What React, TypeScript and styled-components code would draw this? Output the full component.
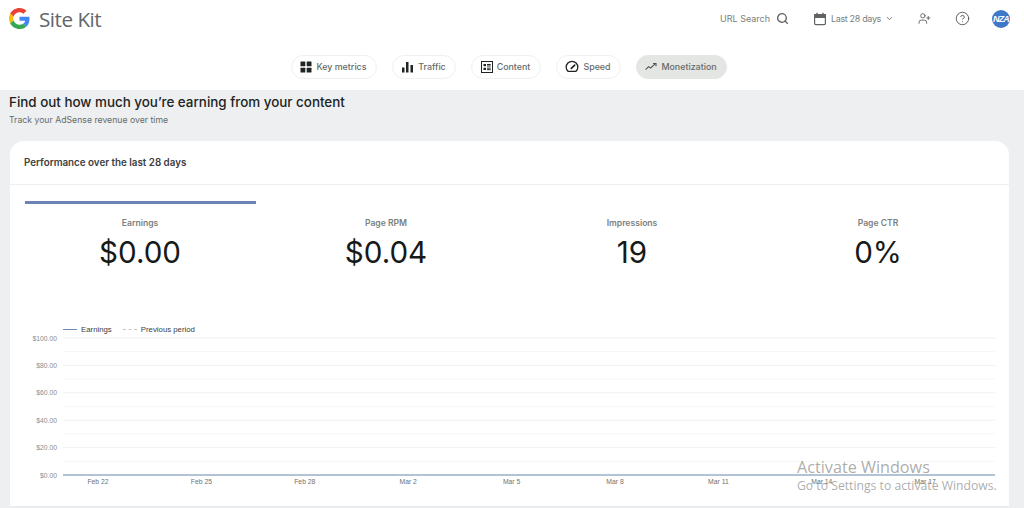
import React from 'react';
import styled, { createGlobalStyle } from 'styled-components';
import { Search, ChevronDown, UserPlus, CircleHelp } from 'lucide-react';

const GlobalStyle = createGlobalStyle`
  html, body {
    margin: 0;
    padding: 0;
    height: 100%;
    overflow: hidden;
    background: #eeeff1;
    font-family: 'Inter', 'Liberation Sans', sans-serif;
  }
`;

const Page = styled.div`
  position: relative;
  width: 1024px;
  height: 508px;
  overflow: hidden;
`;

const Header = styled.header`
  height: 90px;
  background: #ffffff;
  box-sizing: border-box;
  padding: 8px 14px 0 9px;
`;

const TopRow = styled.div`
  display: flex;
  align-items: center;
  height: 21px;
`;

const Brand = styled.div`
  display: flex;
  align-items: center;
  gap: 9px;
  font-family: 'Open Sans', sans-serif;
  font-size: 20.7px;
  color: #63666a;
  letter-spacing: -0.5px;
`;

const Actions = styled.div`
  margin-left: auto;
  display: flex;
  align-items: center;
  color: #5f6561;
  font-size: 9px;
`;

const ActionLabel = styled.span<{ $tight?: boolean }>`
  color: #7b807d;
  letter-spacing: ${p => (p.$tight ? '-0.35px' : '0')};
`;

const ActionGroup = styled.div<{ $gap: number; $after: number }>`
  display: flex;
  align-items: center;
  gap: ${p => p.$gap}px;
  margin-right: ${p => p.$after}px;
`;

const Avatar = styled.div`
  width: 18px;
  height: 18px;
  border-radius: 50%;
  background: #3f78c9;
  color: #ffffff;
  font-family: 'Liberation Sans', sans-serif;
  font-size: 9px;
  font-weight: 700;
  font-style: italic;
  letter-spacing: -0.8px;
  display: flex;
  align-items: center;
  justify-content: center;
`;

const Tabs = styled.nav`
  display: flex;
  justify-content: center;
  gap: 15px;
  margin-top: 26px;
  padding-right: 2px;
`;

const Tab = styled.div<{ $active?: boolean; $width: number }>`
  width: ${p => p.$width}px;
  height: 24px;
  box-sizing: border-box;
  padding-bottom: 1px;
  display: flex;
  align-items: center;
  justify-content: center;
  gap: 4px;
  border-radius: 12px;
  border: 1px solid ${p => (p.$active ? '#e4e6e4' : '#eff0f0')};
  background: ${p => (p.$active ? '#e4e6e4' : '#ffffff')};
  color: #666b68;
  font-size: 8.9px;
  font-weight: 500;
  white-space: nowrap;
`;

const Intro = styled.section`
  padding: 3px 9px 0;
  height: 47px;
  box-sizing: border-box;
`;

const Heading = styled.h1`
  margin: 0;
  font-size: 13.4px;
  line-height: 18px;
  font-weight: 500;
  color: #202422;
`;

const SubHeading = styled.p`
  margin: 3px 0 0;
  font-size: 8.7px;
  line-height: 12px;
  color: #666b68;
`;

const Card = styled.section`
  margin: 4px 15px 0 10px;
  height: 366px;
  box-sizing: border-box;
  background: #ffffff;
  border-radius: 14px 14px 0 0;
  border-bottom: 1px solid #e8eaec;
`;

const CardHeader = styled.div`
  height: 44px;
  box-sizing: border-box;
  padding: 0 14px;
  display: flex;
  align-items: center;
  border-bottom: 1px solid #eeeff1;
  font-size: 9.8px;
  font-weight: 600;
  color: #3c403e;
`;

const Metrics = styled.div`
  display: grid;
  grid-template-columns: repeat(4, 231px);
  gap: 15px;
  padding: 16px 14.5px 0;
`;

const Metric = styled.div<{ $selected?: boolean }>`
  height: 80px;
  box-sizing: border-box;
  border-top: 3px solid ${p => (p.$selected ? '#6c83b3' : 'transparent')};
  text-align: center;
  padding-top: 13px;
`;

const MetricLabel = styled.div`
  font-size: 8.6px;
  line-height: 13px;
  font-weight: 600;
  color: #7b807d;
`;

const MetricValue = styled.div`
  margin-top: 5px;
  font-size: 29.6px;
  line-height: 34px;
  font-weight: 400;
  color: #161a18;
`;

const Legend = styled.div`
  display: flex;
  align-items: center;
  height: 12px;
  margin: 42px 0 0 53px;
  font-family: 'Liberation Sans', sans-serif;
  font-size: 7.8px;
  color: #3c403e;
`;

const LegendItem = styled.div`
  display: flex;
  align-items: center;
  gap: 4px;
  margin-right: 11px;
`;

const LegendLine = styled.span<{ $dashed?: boolean }>`
  width: 14px;
  border-top: ${p => (p.$dashed ? '1px dashed #c4c6c5' : '1px solid #6c8db3')};
`;

const Chart = styled.svg`
  display: block;
  width: 999px;
  height: 160px;
`;

const Watermark = styled.div`
  position: absolute;
  left: 797px;
  top: 457px;
  font-family: 'Open Sans', sans-serif;
  color: rgba(140, 140, 140, 0.72);
  white-space: nowrap;
  pointer-events: none;
`;

const WatermarkTitle = styled.div`
  font-size: 16.2px;
  line-height: 20px;
`;

const WatermarkText = styled.div`
  font-size: 12.2px;
  line-height: 17px;
`;

const GoogleG = () => (
  <svg width="21" height="21" viewBox="0 0 48 48">
    <path fill="#EA4335" d="M24 9.500c3.500 0 6.700 1.300 9.100 3.500l6.800-6.800C35.800 2.400 30.300 0 24 0 14.600 0 6.500 5.400 2.600 13.200l7.900 6.100C12.400 13.600 17.700 9.500 24 9.500z" />
    <path fill="#4285F4" d="M46.900 24.500c0-1.600-.1-3.100-.4-4.500H24v9h12.900c-.6 3-2.200 5.500-4.700 7.200l7.700 6c4.500-4.200 7-10.300 7-17.700z" />
    <path fill="#FBBC05" d="M10.500 28.700c-.5-1.400-.8-3-.8-4.700s.3-3.200.8-4.700l-7.900-6.100C.9 16.500 0 20.100 0 24s.9 7.500 2.600 10.800l7.900-6.100z" />
    <path fill="#34A853" d="M24 48c6.500 0 11.900-2.100 15.900-5.800l-7.700-6c-2.200 1.400-4.900 2.300-8.200 2.300-6.300 0-11.600-4.100-13.500-9.800l-7.900 6.100C6.500 42.600 14.600 48 24 48z" />
  </svg>
);

const CalendarIcon = () => (
  <svg width="14" height="14" viewBox="0 0 14 14" fill="none" stroke="#5f6561" strokeWidth="1.200">
    <rect x="1.600" y="2.600" width="10.800" height="10" rx="1" />
    <rect x="1.600" y="2.600" width="10.800" height="2.800" fill="#5f6561" />
    <path d="M4 .8v2.400M10 .8v2.400" strokeWidth="1.400" />
  </svg>
);

const GridIcon = () => (
  <svg width="12" height="12" viewBox="0 0 12 12" fill="#202422">
    <rect x="0.500" y="0.500" width="4.800" height="4.800" rx="0.500" />
    <rect x="6.700" y="0.500" width="4.800" height="4.800" rx="0.500" />
    <rect x="0.500" y="6.700" width="4.800" height="4.800" rx="0.500" />
    <rect x="6.700" y="6.700" width="4.800" height="4.800" rx="0.500" />
  </svg>
);

const BarsIcon = () => (
  <svg width="13" height="12" viewBox="0 0 13 12" fill="#202422">
    <rect x="1" y="6.500" width="2.500" height="5" />
    <rect x="5" y="1" width="2.500" height="10.500" />
    <rect x="9.500" y="4" width="2.500" height="7.500" />
  </svg>
);

const ArticleIcon = () => (
  <svg width="12" height="12" viewBox="0 0 12 12" fill="none" stroke="#202422" strokeWidth="1">
    <rect x="0.500" y="0.500" width="11" height="11" />
    <rect x="2.500" y="3" width="2.500" height="2.200" fill="#202422" stroke="none" />
    <rect x="2.500" y="6.800" width="2.500" height="2.200" fill="#202422" stroke="none" />
    <path d="M6 3.500h3.700M6 5h3.700M6 7.200h3.700M6 8.700h3.700" />
  </svg>
);

const SpeedIcon = () => (
  <svg width="14" height="13" viewBox="0 0 14 13" fill="none" stroke="#202422" strokeWidth="1.300">
    <path d="M3 11.300h8a5.800 5.800 0 1 0-8 0z" strokeLinejoin="round" />
    <path d="M6.300 8.300l3.400-3.200" strokeWidth="1.700" strokeLinecap="round" />
  </svg>
);

const TrendIcon = () => (
  <svg width="12" height="9" viewBox="0 0 12 9" fill="none" stroke="#4f5552" strokeWidth="1.100">
    <path d="M.6 7.600l3-3 2 1.400 4.600-4.200" />
    <path d="M8 1.500h3v2.800" />
  </svg>
);

const gridRows = [0, 13.7, 27.4, 41.1, 54.8, 68.5, 82.2, 95.9, 109.6, 123.3, 137];
const yLabels = ['$100.00', '$80.00', '$60.00', '$40.00', '$20.00', '$0.00'];
const xLabels = ['Feb 22', 'Feb 25', 'Feb 28', 'Mar 2', 'Mar 5', 'Mar 8', 'Mar 11', 'Mar 14', 'Mar 17'];

const tabs = [
  { label: 'Key metrics', width: 86, icon: <GridIcon /> },
  { label: 'Traffic', width: 64, icon: <BarsIcon /> },
  { label: 'Content', width: 70, icon: <ArticleIcon /> },
  { label: 'Speed', width: 65, icon: <SpeedIcon /> },
  { label: 'Monetization', width: 91, icon: <TrendIcon />, active: true },
];

const metrics = [
  { label: 'Earnings', value: '$0.00', selected: true },
  { label: 'Page RPM', value: '$0.04' },
  { label: 'Impressions', value: '19' },
  { label: 'Page CTR', value: '0%' },
];

const App: React.FC = () => (
  <Page>
    <GlobalStyle />
    <Header>
      <TopRow>
        <Brand>
          <GoogleG />
          Site Kit
        </Brand>
        <Actions>
          <ActionGroup $gap={6} $after={24}>
            <ActionLabel>URL Search</ActionLabel>
            <Search size={13} strokeWidth={2.6} />
          </ActionGroup>
          <ActionGroup $gap={4} $after={24}>
            <CalendarIcon />
            <ActionLabel $tight>Last 28 days</ActionLabel>
            <ChevronDown size={9} strokeWidth={2.2} />
          </ActionGroup>
          <ActionGroup $gap={0} $after={24}>
            <UserPlus size={13} strokeWidth={1.7} />
          </ActionGroup>
          <ActionGroup $gap={0} $after={22}>
            <CircleHelp size={15} strokeWidth={1.6} />
          </ActionGroup>
          <Avatar>NZA</Avatar>
        </Actions>
      </TopRow>
      <Tabs>
        {tabs.map(tab => (
          <Tab key={tab.label} $width={tab.width} $active={tab.active}>
            {tab.icon}
            {tab.label}
          </Tab>
        ))}
      </Tabs>
    </Header>
    <Intro>
      <Heading>Find out how much you’re earning from your content</Heading>
      <SubHeading>Track your AdSense revenue over time</SubHeading>
    </Intro>
    <Card>
      <CardHeader>Performance over the last 28 days</CardHeader>
      <Metrics>
        {metrics.map(metric => (
          <Metric key={metric.label} $selected={metric.selected}>
            <MetricLabel>{metric.label}</MetricLabel>
            <MetricValue>{metric.value}</MetricValue>
          </Metric>
        ))}
      </Metrics>
      <Legend>
        <LegendItem>
          <LegendLine />
          Earnings
        </LegendItem>
        <LegendItem>
          <LegendLine $dashed />
          Previous period
        </LegendItem>
      </Legend>
      <Chart viewBox="0 0 999 160">
        {gridRows.map((y, i) => (
          <line
            key={y}
            x1="53"
            x2="985"
            y1={y + 3}
            y2={y + 3}
            stroke={i % 2 === 0 ? '#f0f1f0' : '#f6f6f6'}
          />
        ))}
        <line x1="53" x2="985" y1="140" y2="140" stroke="#6c8db3" strokeWidth="1.200" />
        {yLabels.map((label, i) => (
          <text
            key={label}
            x="47"
            y={5.500 + i * 27.4}
            textAnchor="end"
            fontFamily="Liberation Sans"
            fontSize="6.800"
            fill="#8a8d8b"
          >
            {label}
          </text>
        ))}
        {xLabels.map((label, i) => (
          <text
            key={label}
            x={88 + i * 103.4}
            y="149"
            textAnchor="middle"
            fontFamily="Liberation Sans"
            fontSize="6.800"
            fill="#6f7270"
          >
            {label}
          </text>
        ))}
      </Chart>
    </Card>
    <Watermark>
      <WatermarkTitle>Activate Windows</WatermarkTitle>
      <WatermarkText>Go to Settings to activate Windows.</WatermarkText>
    </Watermark>
  </Page>
);

export default App;
